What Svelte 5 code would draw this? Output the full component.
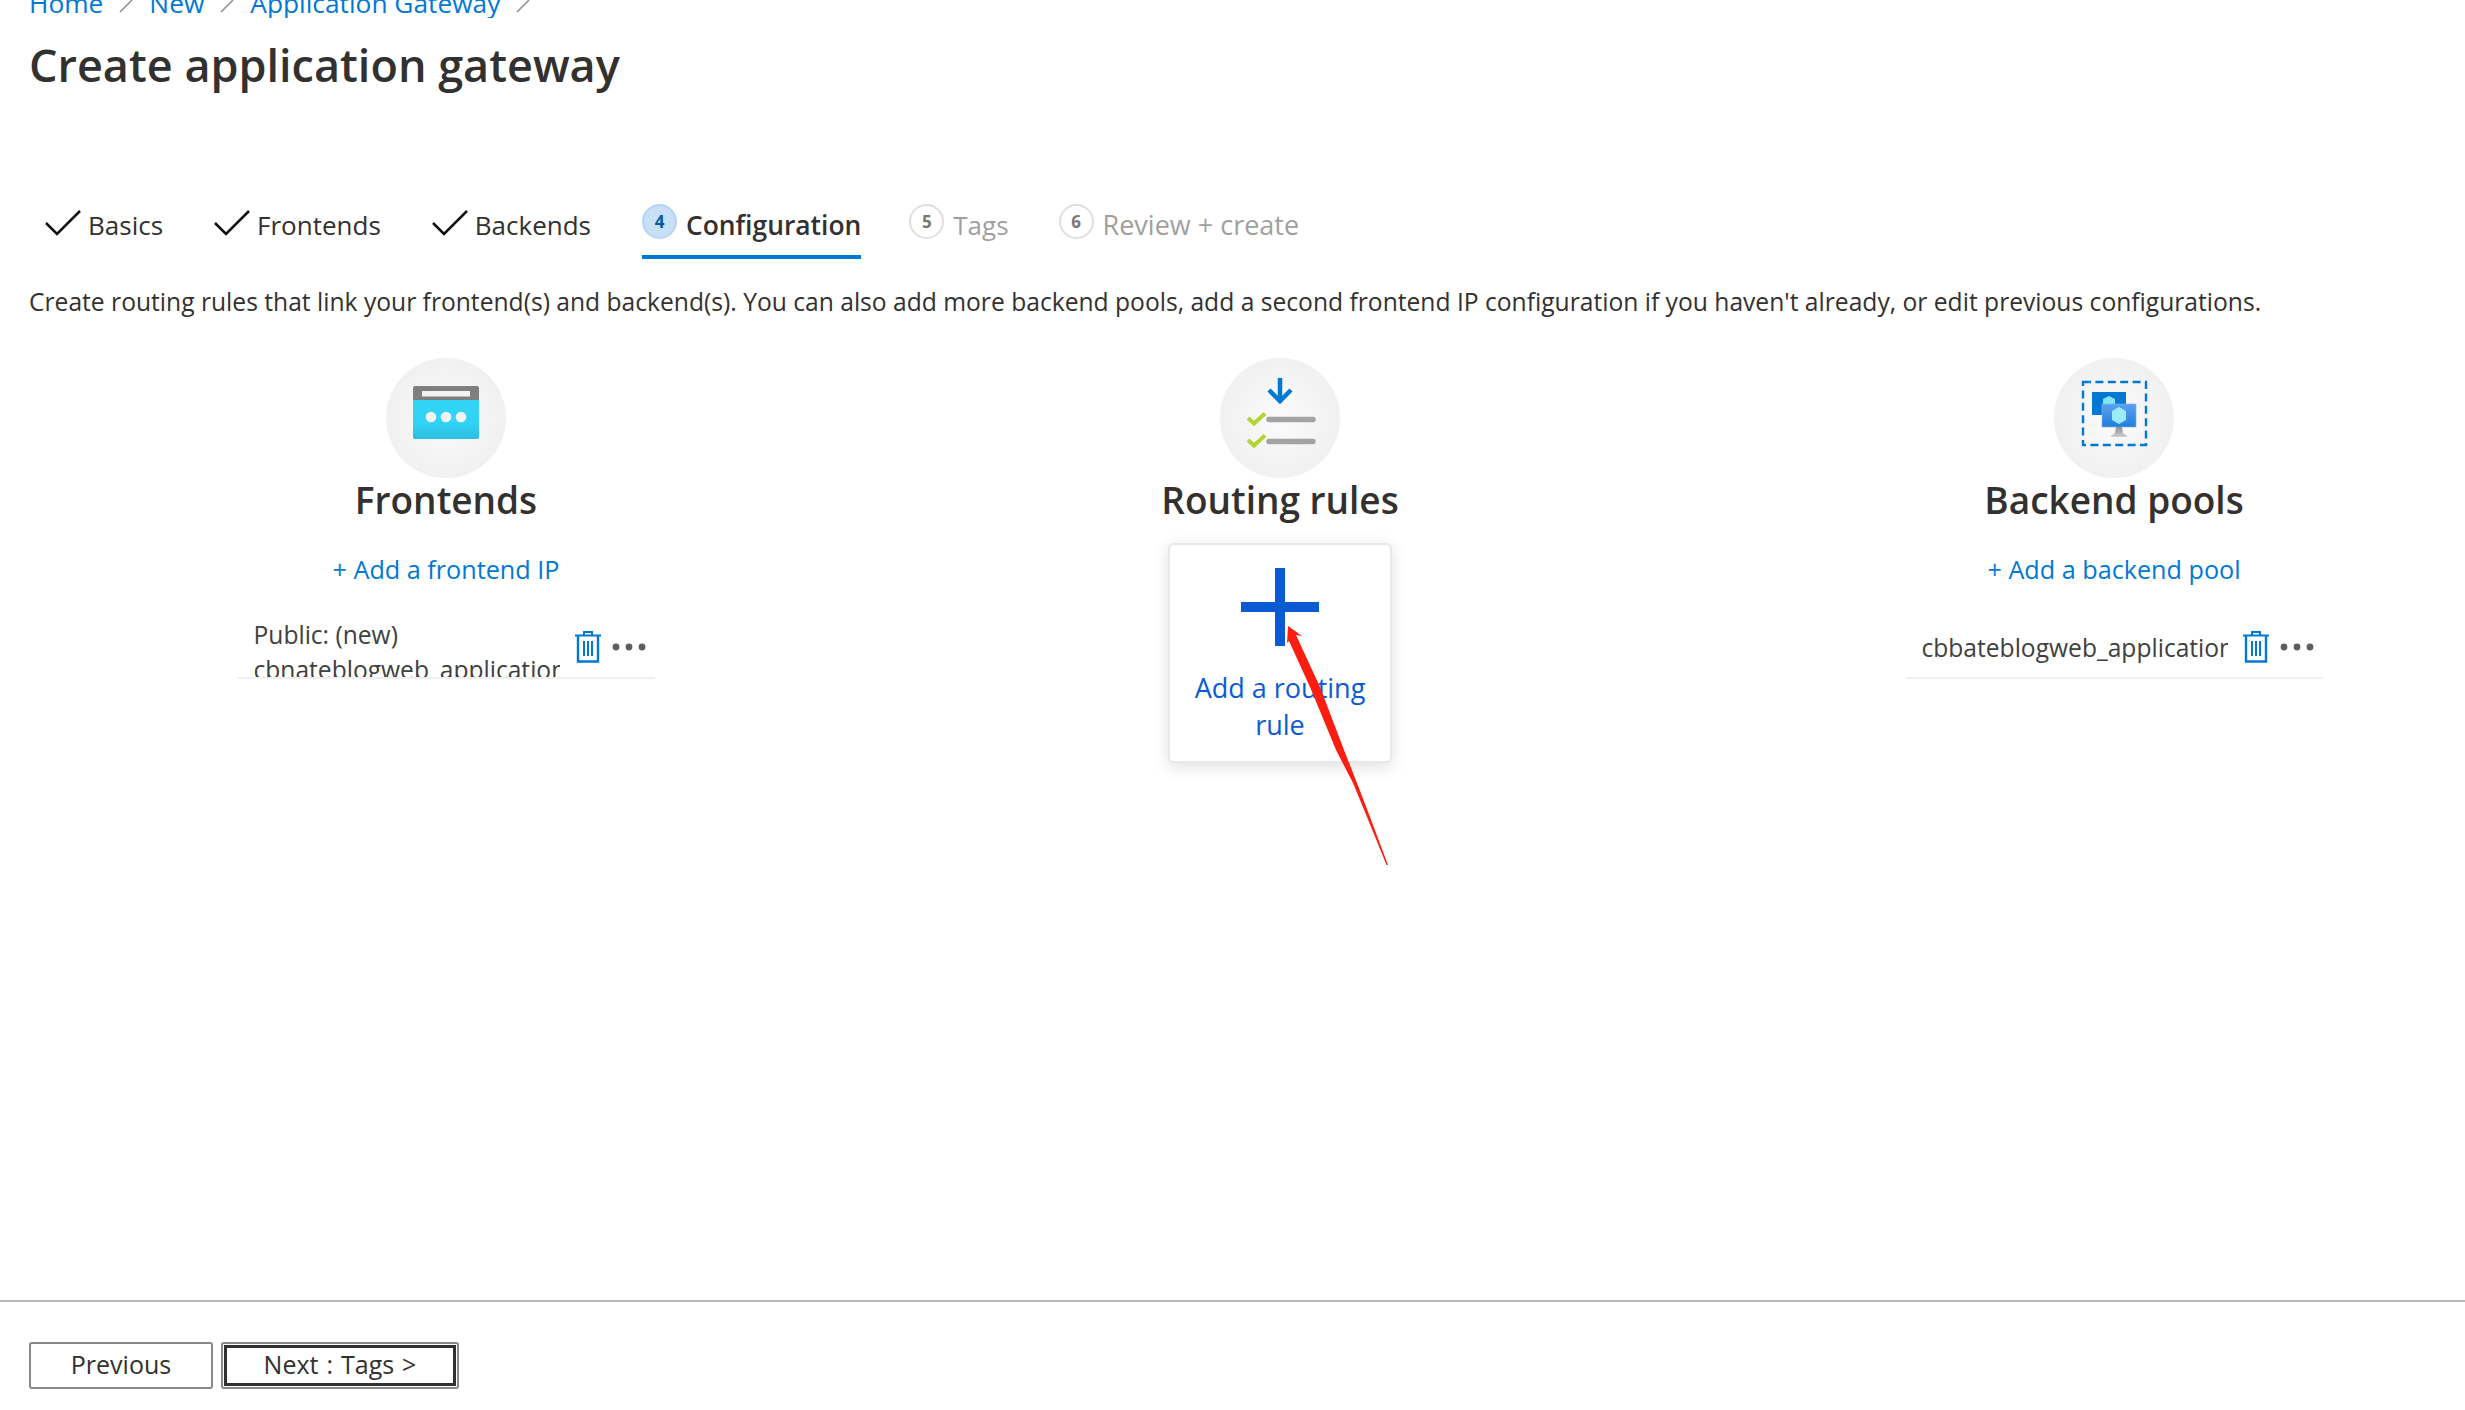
<script lang="ts">
	const done = [
		{ label: 'Basics' },
		{ label: 'Frontends' },
		{ label: 'Backends' }
	];
	const pending = [
		{ n: 5, label: 'Tags' },
		{ n: 6, label: 'Review + create' }
	];
	const crumbs = ['Home', 'New', 'Application Gateway'];
</script>

{#snippet trash()}
	<svg class="trash" width="26" height="32" viewBox="0 0 26 32" fill="none" stroke="#0078d4" stroke-width="2">
		<path d="M0 4.5h26M9 4V1h8v3" />
		<path d="M3 5v25.5h20V5" stroke-width="2.4" />
		<path d="M9 10v15M13 10v15M17 10v15" />
	</svg>
{/snippet}

{#snippet dots()}
	<svg class="dots" width="34" height="8" viewBox="0 0 34 8" fill="#605e5c">
		<circle cx="4" cy="4" r="3.4" /><circle cx="17" cy="4" r="3.4" /><circle cx="30" cy="4" r="3.4" />
	</svg>
{/snippet}

<div class="page">
	<nav class="crumbs">
		{#each crumbs as crumb}
			<span class="crumb">{crumb}</span>
			<svg width="14" height="14" viewBox="0 0 14 14" stroke="#8a8886" stroke-width="1.4"><path d="M1 13 13 1" /></svg>
		{/each}
	</nav>
	<h1>Create application gateway</h1>

	<div class="tabs">
		{#each done as tab}
			<div class="tab check">
				<svg width="36" height="26" viewBox="0 0 36 26" fill="none" stroke="#111" stroke-width="2.6"><path d="M1 13l11 11L35 1" /></svg>
				<span>{tab.label}</span>
			</div>
		{/each}
		<div class="tab active">
			<span class="num">4</span>
			<span>Configuration</span>
		</div>
		{#each pending as tab}
			<div class="tab off">
				<span class="num">{tab.n}</span>
				<span>{tab.label}</span>
			</div>
		{/each}
	</div>

	<p class="intro">Create routing rules that link your frontend(s) and backend(s). You can also add more backend pools, add a second frontend IP configuration if you haven't already, or edit previous configurations.</p>

	<div class="columns">
		<section class="col">
			<div class="disc">
				<svg width="120" height="120" viewBox="0 0 120 120">
					<defs>
						<linearGradient id="cyan" x1="0" y1="0" x2="0" y2="1">
							<stop offset="0.55" stop-color="#32d4f5" /><stop offset="1" stop-color="#2bbfe2" />
						</linearGradient>
					</defs>
					<path d="M29 28h62a2 2 0 0 1 2 2v12H27V30a2 2 0 0 1 2-2z" fill="#7f7f7f" />
					<path d="M27 42h66v37a2 2 0 0 1-2 2H29a2 2 0 0 1-2-2z" fill="url(#cyan)" />
					<rect x="36" y="33" width="48" height="5.5" fill="#f2f2f2" />
					<circle cx="45" cy="59" r="5.3" fill="#f2f2f2" /><circle cx="60" cy="59" r="5.3" fill="#f2f2f2" /><circle cx="75" cy="59" r="5.3" fill="#f2f2f2" />
				</svg>
			</div>
			<h2>Frontends</h2>
			<span class="add">+ Add a frontend IP</span>
			<div class="row">
				<div class="row-text">Public: (new)<br />cbnateblogweb_application</div>
				{@render trash()}
				{@render dots()}
			</div>
		</section>

		<section class="col">
			<div class="disc">
				<svg width="120" height="120" viewBox="0 0 120 120" fill="none">
					<path d="M60 20v24" stroke="#0078d4" stroke-width="4.5" />
					<path d="M49 32l11 11 11-11" stroke="#0078d4" stroke-width="4.5" />
					<path d="M28 60l6 5.5 11-10M28 82l6 5.5 11-10" stroke="#b4d334" stroke-width="4" />
					<path d="M49 61.5h44M49 83.5h44" stroke="#a3a3a3" stroke-width="5.5" stroke-linecap="round" />
				</svg>
			</div>
			<h2>Routing rules</h2>
			<div class="card">
				<svg width="78" height="78" viewBox="0 0 78 78" fill="#0a5bd3"><path d="M34 0h10v34h34v10H44v34H34V44H0V34h34z" /></svg>
				<span class="card-label">Add a routing rule</span>
			</div>
		</section>

		<section class="col">
			<div class="disc">
				<svg width="120" height="120" viewBox="0 0 120 120" fill="none">
					<defs>
						<linearGradient id="screen" x1="0" y1="0" x2="0" y2="1">
							<stop offset="0" stop-color="#5ea0ef" /><stop offset="1" stop-color="#1f7fdc" />
						</linearGradient>
						<linearGradient id="stand" x1="0" y1="0" x2="0" y2="1">
							<stop offset="0" stop-color="#8f8f8f" /><stop offset="1" stop-color="#cfcfcf" />
						</linearGradient>
					</defs>
					<rect x="29" y="24" width="63" height="63" stroke="#0078d4" stroke-width="2.4" stroke-dasharray="8 4.4" />
					<rect x="38" y="34" width="34" height="23" fill="#0078d4" />
					<path d="M55 38l6 3v7l-6 3-6-3v-7z" fill="#83e3f7" />
					<rect x="48" y="46" width="34" height="23" fill="url(#screen)" stroke="#7fb6f2" stroke-width="0.6" />
					<path d="M65 49l7 4v9l-7 4-7-4v-9z" fill="#9cebfa" />
					<path d="M62 69h6l1 6 4 3v1H57v-1l4-3z" fill="url(#stand)" />
				</svg>
			</div>
			<h2>Backend pools</h2>
			<span class="add">+ Add a backend pool</span>
			<div class="row">
				<div class="row-text single">cbbateblogweb_application</div>
				{@render trash()}
				{@render dots()}
			</div>
		</section>
	</div>

	<div class="footer">
		<button class="btn">Previous</button>
		<button class="btn next">Next : Tags &gt;</button>
	</div>

	<svg class="arrow" width="110" height="245" viewBox="1284 624 110 245">
		<path d="M1288 626L1302 636L1296 635L1320 687L1344 750L1357 783L1370 817L1388 865L1386.5 865L1367 817L1353 783L1336 750L1310 687L1289 641L1287 643Z" fill="#fb1d10" />
	</svg>
</div>

<style>
	:global(body) {
		margin: 0;
		background: #fff;
	}

	.page {
		position: relative;
		width: 2465px;
		height: 1410px;
		overflow: hidden;
		display: flex;
		flex-direction: column;
		font-family: 'Open Sans', 'Noto Sans', sans-serif;
		color: #323130;
	}

	.crumbs {
		display: flex;
		align-items: flex-end;
		gap: 16px;
		height: 18px;
		padding-left: 29px;
		overflow: hidden;
		color: #0078d4;
		font-size: 26.3px;
		line-height: 26px;
	}

	.crumbs svg {
		margin-bottom: 5px;
		flex: none;
	}

	.crumb {
		margin-bottom: 2px;
	}

	h1 {
		margin: 16px 0 0 29px;
		height: 62px;
		font-size: 45px;
		line-height: 62px;
		font-weight: 600;
	}

	.tabs {
		display: flex;
		gap: 51px;
		margin: 108px 0 0 45px;
		height: 55px;
	}

	.tab {
		display: flex;
		align-items: center;
		gap: 9px;
		height: 55px;
		box-sizing: border-box;
		font-size: 26px;
		padding-bottom: 14px;
	}

	.tab.check {
		gap: 7px;
	}

	.tab.check svg {
		margin-top: -4px;
	}

	.tab.active {
		border-bottom: 4px solid #0078d4;
		padding-bottom: 10px;
		font-size: 26.4px;
		font-weight: 600;
		margin-right: -3px;
	}

	.tab.off {
		color: #a19f9d;
	}

	.tab.off:last-child {
		font-size: 27px;
		margin-left: -1px;
	}

	.num {
		width: 35px;
		height: 35px;
		box-sizing: border-box;
		display: flex;
		align-items: center;
		justify-content: center;
		border: 2px solid #e1dfdd;
		border-radius: 50%;
		font-size: 17px;
		font-weight: 700;
		color: #797775;
		margin-top: -6px;
	}

	.active .num {
		background: #c7e0f4;
		border-color: #b5d4f8;
		color: #005a9e;
	}

	.intro {
		margin: 25px 0 0 29px;
		font-size: 24.64px;
		line-height: 36px;
		white-space: nowrap;
	}

	.columns {
		display: grid;
		grid-template-columns: repeat(3, 834px);
		margin: 38px 0 0 29px;
		flex: 1;
	}

	.col {
		display: flex;
		flex-direction: column;
		align-items: center;
	}

	.disc {
		width: 120px;
		height: 120px;
		flex: none;
		border-radius: 50%;
		background: radial-gradient(circle, #fbfbfb 0%, #ececec 100%);
		display: flex;
		align-items: center;
		justify-content: center;
	}

	h2 {
		margin: 2px 0 0;
		font-size: 37px;
		line-height: 40px;
		font-weight: 600;
	}

	.add {
		margin-top: 32px;
		font-size: 25.2px;
		line-height: 35px;
		color: #0078d4;
	}

	.row {
		width: 417px;
		height: 62px;
		box-sizing: border-box;
		margin-top: 30px;
		display: flex;
		align-items: center;
		border-bottom: 2px solid #f0f0f0;
		overflow: hidden;
	}

	.row-text {
		width: 306px;
		margin-left: 16px;
		margin-right: 15px;
		align-self: flex-start;
		font-size: 24.6px;
		line-height: 35px;
		white-space: nowrap;
		overflow: hidden;
		flex: none;
		color: #404040;
	}

	.row-text.single {
		align-self: center;
	}

	.trash {
		flex: none;
		margin-right: 11px;
	}

	.card {
		width: 224px;
		height: 220px;
		box-sizing: border-box;
		margin-top: 23px;
		padding: 23px 20px 0;
		display: flex;
		flex-direction: column;
		align-items: center;
		background: #fff;
		border: 2px solid #e8e8e8;
		border-radius: 6px;
		box-shadow: 0 4px 16px rgba(0, 0, 0, 0.13);
	}

	.card-label {
		margin-top: 23px;
		text-align: center;
		font-size: 27px;
		line-height: 37px;
		color: #0a5bd3;
	}

	.footer {
		flex: none;
		height: 110px;
		box-sizing: border-box;
		border-top: 2px solid #b8b8b8;
		padding: 40px 0 0 29px;
		display: flex;
		gap: 8px;
		align-items: flex-start;
	}

	.btn {
		width: 184px;
		height: 47px;
		padding: 0 0 3px;
		background: #fff;
		border: 2px solid #8a8886;
		border-radius: 3px;
		font-family: inherit;
		font-size: 25px;
		font-weight: 500;
		color: #323130;
	}

	.next {
		width: 238px;
		outline: 3px solid #323130;
		outline-offset: -6px;
		word-spacing: 1.5px;
	}

	.arrow {
		position: absolute;
		left: 1284px;
		top: 624px;
	}
</style>
